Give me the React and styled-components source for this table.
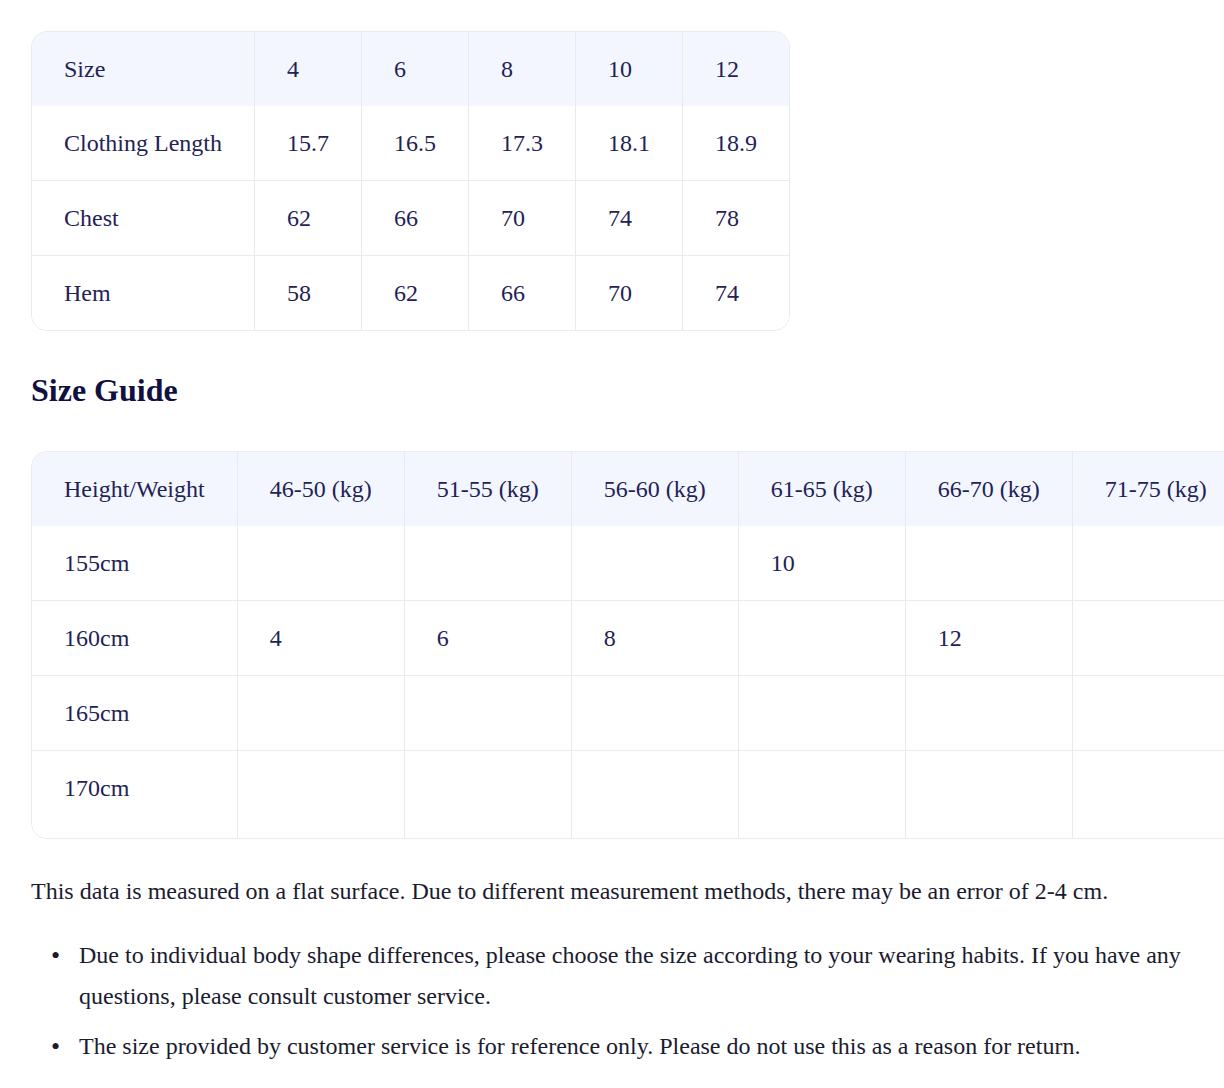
import React from "react";
import styled, { createGlobalStyle } from "styled-components";

const GlobalStyle = createGlobalStyle`
  body {
    margin: 0;
    background: #ffffff;
    font-family: "Liberation Serif", "Times New Roman", serif;
    overflow: hidden;
  }
`;

const Page = styled.div`
  padding: 31px;
  width: 1162px;
`;

const TableBox = styled.div`
  width: max-content;
  border: 1px solid #e8e9f1;
  border-radius: 16px;
  overflow: hidden;
  background: #fff;
`;

const Table = styled.table`
  border-collapse: separate;
  border-spacing: 0;
  font-size: 24px;
  line-height: 26px;
  color: #1f2356;
`;

const Row = styled.tr`
  background: ${(p) => (p.head ? "#f3f6ff" : "#ffffff")};
  & + & td {
    border-top: 1px solid #e8e9f1;
  }
`;

const Cell = styled.td`
  padding: 24px 32px ${(p) => (p.tall ? "37px" : "24px")} 32px;
  text-align: left;
  white-space: nowrap;
  & + & {
    border-left: 1px solid #e8e9f1;
  }
`;

const Heading = styled.h2`
  margin: 41px 0 42px;
  font-size: 32px;
  line-height: 37px;
  font-weight: bold;
  color: #0f1142;
`;

const Note = styled.p`
  margin: 32px 0 0;
  font-size: 24px;
  line-height: 41px;
  color: #1b1b2f;
`;

const List = styled.ul`
  margin: 23px 0 0;
  padding-left: 20px;
  list-style: none;
  font-size: 24px;
  line-height: 41px;
  color: #1b1b2f;
`;

const Item = styled.li`
  display: flex;
  & + & {
    margin-top: 9px;
  }
`;

const Bullet = styled.span`
  flex: 0 0 28px;
  font-size: 26px;
`;

const sizeRows = [
  ["Size", "4", "6", "8", "10", "12"],
  ["Clothing Length", "15.7", "16.5", "17.3", "18.1", "18.9"],
  ["Chest", "62", "66", "70", "74", "78"],
  ["Hem", "58", "62", "66", "70", "74"],
];

const guideRows = [
  ["Height/Weight", "46-50 (kg)", "51-55 (kg)", "56-60 (kg)", "61-65 (kg)", "66-70 (kg)", "71-75 (kg)"],
  ["155cm", "", "", "", "10", "", ""],
  ["160cm", "4", "6", "8", "", "12", ""],
  ["165cm", "", "", "", "", "", ""],
  ["170cm", "", "", "", "", "", ""],
];

const DataTable = ({ rows, tallLast }) => (
  <TableBox>
    <Table>
      <tbody>
        {rows.map((row, i) => (
          <Row key={i} head={i === 0}>
            {row.map((c, j) => (
              <Cell key={j} tall={tallLast && i === rows.length - 1}>
                {c}
              </Cell>
            ))}
          </Row>
        ))}
      </tbody>
    </Table>
  </TableBox>
);

const App = () => (
  <>
    <GlobalStyle />
    <Page>
      <DataTable rows={sizeRows} />
      <Heading>Size Guide</Heading>
      <DataTable rows={guideRows} tallLast />
      <Note>
        This data is measured on a flat surface. Due to different measurement
        methods, there may be an error of 2-4 cm.
      </Note>
      <List>
        <Item>
          <Bullet>•</Bullet>
          <span>
            Due to individual body shape differences, please choose the size
            according to your wearing habits. If you have any questions, please
            consult customer service.
          </span>
        </Item>
        <Item>
          <Bullet>•</Bullet>
          <span>
            The size provided by customer service is for reference only. Please
            do not use this as a reason for return.
          </span>
        </Item>
      </List>
    </Page>
  </>
);

export default App;
